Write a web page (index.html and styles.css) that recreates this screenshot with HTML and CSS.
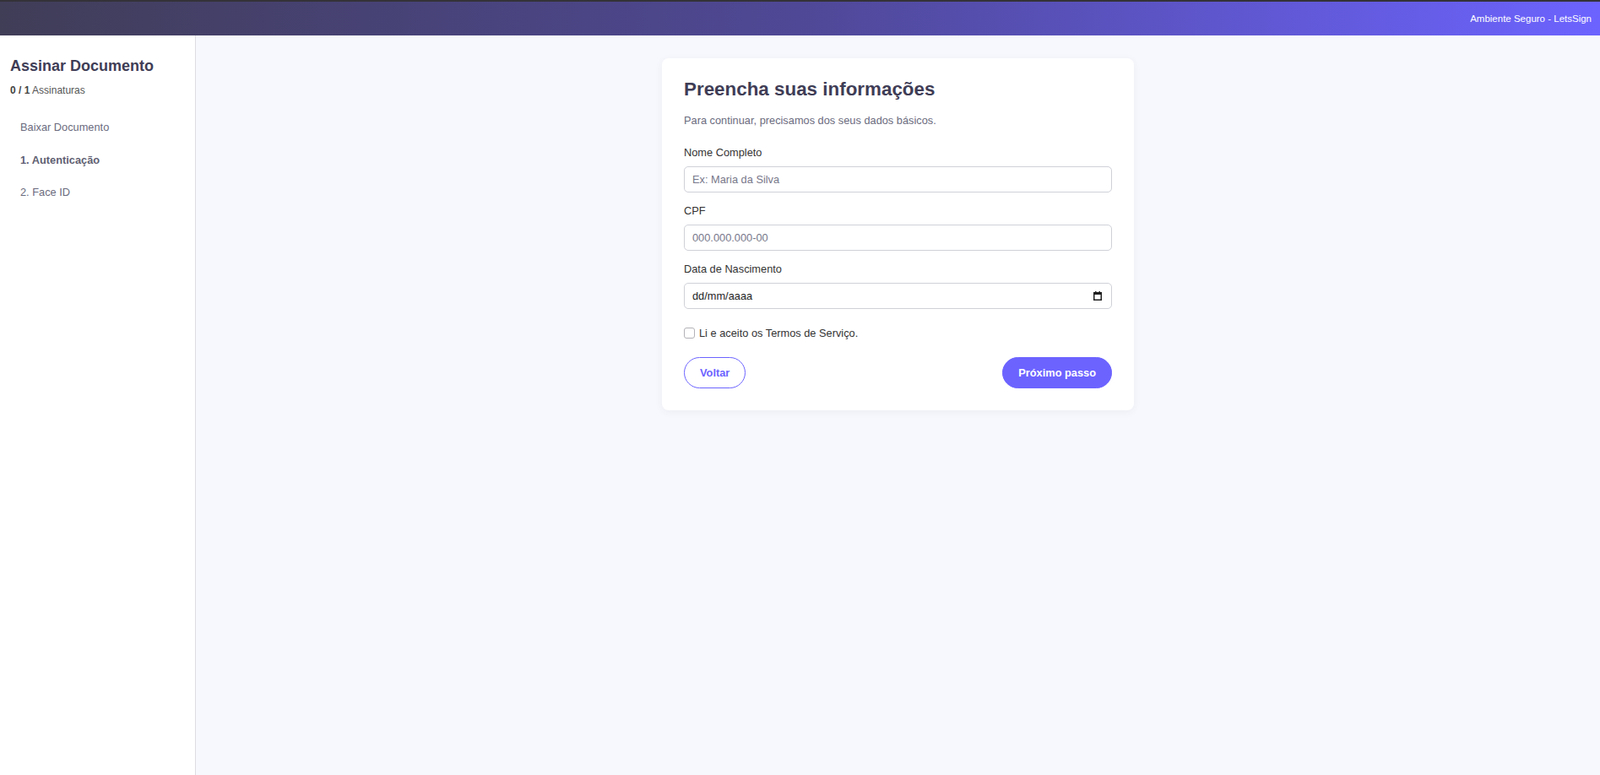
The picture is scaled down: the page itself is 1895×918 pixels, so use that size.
FILE: index.html
```html
<!DOCTYPE html>
<html lang="pt-BR">
<head>
<meta charset="utf-8">
<title>Assinar Documento - LetsSign</title>
<link rel="stylesheet" href="styles.css">
</head>
<body>
<header class="topbar">
  <span class="topbar-text">Ambiente Seguro - LetsSign</span>
</header>
<div class="layout">
  <aside class="sidebar">
    <h2 class="side-title">Assinar Documento</h2>
    <p class="side-count"><strong>0 / 1</strong> Assinaturas</p>
    <nav class="side-nav">
      <a class="side-item">Baixar Documento</a>
      <a class="side-item active">1. Autenticação</a>
      <a class="side-item">2. Face ID</a>
    </nav>
  </aside>
  <main class="main">
    <section class="card">
      <h1 class="card-title">Preencha suas informações</h1>
      <p class="card-sub">Para continuar, precisamos dos seus dados básicos.</p>
      <div class="field">
        <label class="field-label">Nome Completo</label>
        <input class="input" type="text" placeholder="Ex: Maria da Silva">
      </div>
      <div class="field">
        <label class="field-label">CPF</label>
        <input class="input" type="text" placeholder="000.000.000-00">
      </div>
      <div class="field">
        <label class="field-label">Data de Nascimento</label>
        <div class="input date-input">
          <span class="date-text">dd/mm/aaaa</span>
          <svg class="cal-icon" width="10" height="11" viewBox="0 0 10 11">
            <rect x="0" y="1" width="10" height="10" fill="#1f1f1f"/>
            <rect x="1.5" y="4" width="7" height="5.5" fill="#fff"/>
            <rect x="2" y="0" width="1.5" height="2" fill="#1f1f1f"/>
            <rect x="6.5" y="0" width="1.5" height="2" fill="#1f1f1f"/>
          </svg>
        </div>
      </div>
      <label class="check-row">
        <span class="check-box"></span>
        <span>Li e aceito os Termos de Serviço.</span>
      </label>
      <div class="actions">
        <button class="btn btn-outline">Voltar</button>
        <button class="btn btn-primary">Próximo passo</button>
      </div>
    </section>
  </main>
</div>
</body>
</html>
```
FILE: styles.css
```css
* { box-sizing: border-box; }

html, body {
  margin: 0;
  padding: 0;
  height: 100%;
}

body {
  font-family: "Liberation Sans", Arial, sans-serif;
  color: #333;
  background: #f7f8fd;
  display: flex;
  flex-direction: column;
}

.topbar {
  height: 42px;
  border-top: 2px solid #343238;
  background: linear-gradient(90deg, #403d57 0%, #4f4896 50%, #6c63ff 100%);
  display: flex;
  align-items: center;
  justify-content: flex-end;
  padding: 0 10px 1px 0;
  flex-shrink: 0;
}

.topbar-text {
  color: #fff;
  font-size: 11.5px;
}

.layout {
  flex: 1;
  display: flex;
  min-height: 0;
}

.sidebar {
  width: 232px;
  flex-shrink: 0;
  background: #fff;
  border-right: 1px solid #dcdce2;
  padding: 26px 12px;
}

.side-title {
  margin: 0;
  font-size: 18px;
  line-height: 21px;
  font-weight: 700;
  color: #3f3d56;
}

.side-count {
  margin: 11px 0 0;
  font-size: 12px;
  line-height: 14px;
  color: #555;
}

.side-count strong {
  color: #444;
}

.side-nav {
  margin-top: 18px;
  display: flex;
  flex-direction: column;
}

.side-item {
  display: block;
  padding: 12px 12px;
  font-size: 12.8px;
  line-height: 14.5px;
  color: #6b6b7e;
}

.side-item.active {
  font-weight: 700;
  color: #5f5f72;
}

.main {
  flex: 1;
  display: flex;
  justify-content: center;
  align-items: flex-start;
  padding: 27px 0;
}

.card {
  width: 559px;
  background: #fff;
  border-radius: 8px;
  box-shadow: 0 2px 10px rgba(60, 60, 90, 0.06);
  padding: 23px 26px 26px;
}

.card-title {
  margin: 0;
  font-size: 22.4px;
  line-height: 27px;
  font-weight: 700;
  color: #3f3d56;
}

.card-sub {
  margin: 16px 0 23px;
  font-size: 12.8px;
  line-height: 15px;
  color: #6b6b7e;
}

.field {
  margin-bottom: 14px;
}

.field-label {
  display: block;
  font-size: 12.8px;
  line-height: 15px;
  color: #333;
  margin-bottom: 9px;
}

.input {
  display: block;
  width: 100%;
  height: 31px;
  border: 1px solid #cfd1d8;
  border-radius: 5px;
  padding: 0 9px;
  font-family: "Liberation Sans", Arial, sans-serif;
  font-size: 12.8px;
  color: #222;
  background: #fff;
  outline: none;
}

.input::placeholder {
  color: #77778a;
}

.date-input {
  display: flex;
  align-items: center;
  justify-content: space-between;
  padding: 0 11px 0 9px;
}

.date-text {
  color: #1e1e1e;
}

.cal-icon {
  display: block;
}

.check-row {
  display: flex;
  align-items: center;
  margin-top: 21px;
  font-size: 12.8px;
  line-height: 15px;
  color: #333;
}

.check-box {
  width: 13px;
  height: 13px;
  margin-right: 5px;
  border: 1px solid #b2b2b8;
  border-radius: 3px;
  background: #fff;
  flex-shrink: 0;
}

.actions {
  display: flex;
  justify-content: space-between;
  margin-top: 21px;
}

.btn {
  height: 37px;
  padding: 0 18px;
  border-radius: 19px;
  font-family: "Liberation Sans", Arial, sans-serif;
  font-size: 12.8px;
  font-weight: 700;
  cursor: pointer;
  border: 1px solid #6c63ff;
}

.btn-outline {
  background: #fff;
  color: #6c63ff;
}

.btn-primary {
  background: #6c63ff;
  color: #fff;
}
```
